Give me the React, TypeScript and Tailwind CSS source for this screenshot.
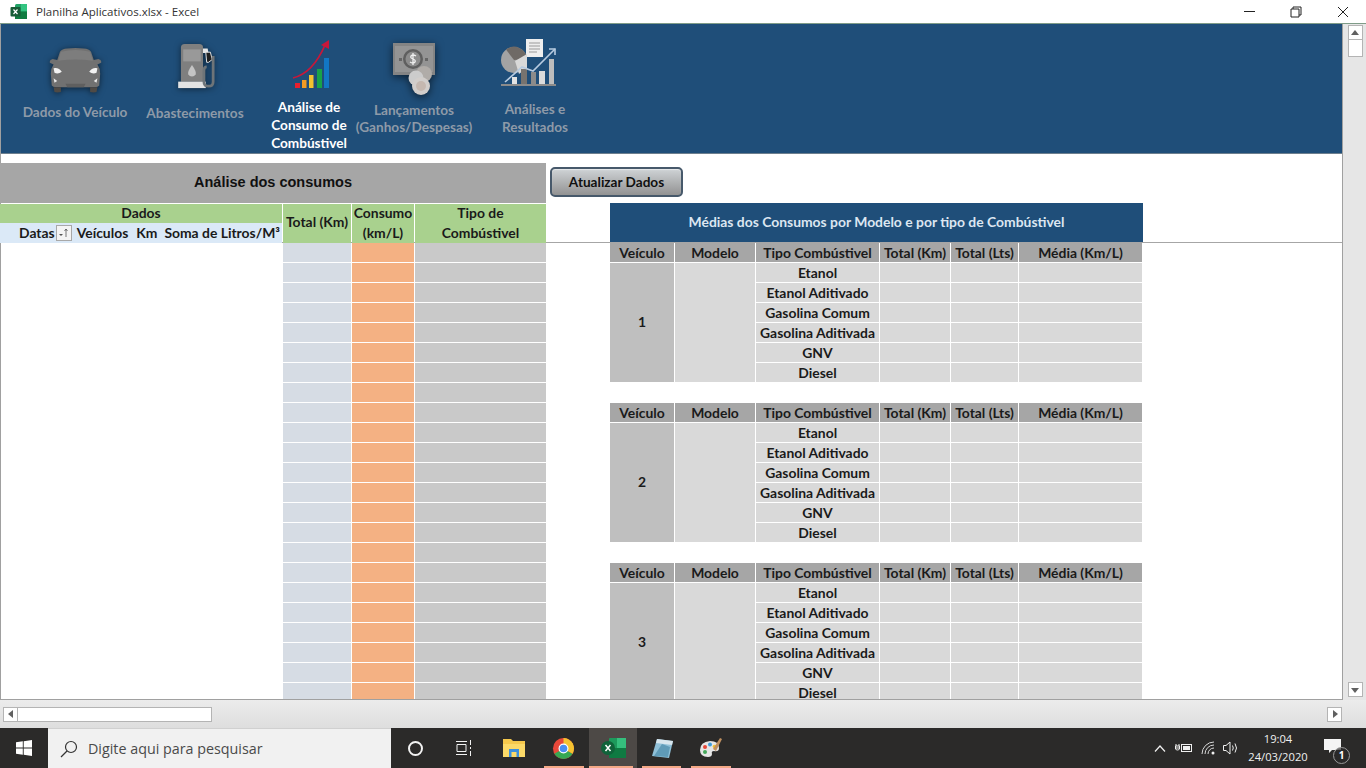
const calibri = { fontFamily: '"Lato", "Liberation Sans", sans-serif' };
const segoe = { fontFamily: '"Open Sans", sans-serif' };

function CarIcon() {
  return (
    <svg width="53" height="46" viewBox="0 0 58 50" className="drop-shadow-[0_1px_3px_rgba(0,0,0,0.55)]">
      <path d="M5 19 L1 17 Q0 14 4 13 L9 14 L12 5 Q14 2 20 1.500 Q29 0.500 38 1.500 Q44 2 46 5 L49 14 L54 13 Q58 14 57 17 L53 19 Q56 23 56 29 L55 42 Q54 44 50 44 L8 44 Q4 44 3 42 L2 29 Q2 23 5 19 Z" fill="#717171" />
      <path d="M13 5 Q29 1 45 5 L48 15 Q29 12 10 15 Z" fill="#7d7d7d" />
      <path d="M5 44 H13 V49 Q9 50 6 49 Z M45 44 H53 L52 49 Q49 50 45 49 Z" fill="#4f4a45" />
      <path d="M5 23 Q11 22 14 27 Q10 30 6 28 Z M53 23 Q47 22 44 27 Q48 30 52 28 Z" fill="#f2f2f2" />
      <path d="M5 34 L9 37 L6 39 Z M53 34 L49 37 L52 39 Z" fill="#e8e8e8" />
      <path d="M18 40 H40 L38 44 H20 Z" fill="#5f5f5f" />
    </svg>
  );
}

function PumpIcon() {
  return (
    <svg width="39" height="46" viewBox="0 0 42 50" className="ml-[5px] drop-shadow-[0_1px_3px_rgba(0,0,0,0.5)]">
      <path d="M3 5 Q3 1 7 1 H23 Q27 1 27 5 V42 H3 Z" fill="#7f7f7f" />
      <rect x="5.500" y="7" width="19" height="13" fill="#999999" />
      <path d="M15 24 Q20 31 19 34 A4.500 4.500 0 0 1 11 34 Q10 31 15 24 Z" fill="#c4c4c4" />
      <rect x="0" y="42" width="30" height="7" fill="#e3e3e3" />
      <path d="M27 6 H32 L33 11 H27 Z" fill="#e6e6e6" />
      <path d="M30 10 H35 L37 18 L33 21 H31 Z" fill="#202020" stroke="#eeeeee" strokeWidth="1" />
      <path d="M38 14 V42 Q38 47 33 47 Q28 47 28 42 V30 Q28 26 31 26" fill="none" stroke="#6e7478" strokeWidth="3" />
    </svg>
  );
}

function ChartIcon() {
  return (
    <svg width="38" height="48" viewBox="0 0 38 48" className="ml-[4px]">
      <rect x="3" y="43" width="5" height="5" fill="#e81f2e" />
      <rect x="10" y="40" width="4.500" height="8" fill="#f39c24" />
      <rect x="17" y="35" width="4.500" height="13" fill="#f2c230" />
      <rect x="25" y="29" width="5" height="19" fill="#17a349" />
      <rect x="32" y="18" width="5" height="30" fill="#1277c4" />
      <path d="M1 38 Q21 33 33 5" fill="none" stroke="#c8173a" strokeWidth="1.800" />
      <path d="M29 5 L37 0 L37 9 Z" fill="#c8173a" />
    </svg>
  );
}

function MoneyIcon() {
  return (
    <svg width="44" height="56" viewBox="0 0 44 56" className="drop-shadow-[0_2px_4px_rgba(0,0,0,0.6)]">
      <rect x="1" y="0" width="42" height="32" fill="#848484" />
      <rect x="3" y="3" width="38" height="26" fill="#949494" />
      <circle cx="21" cy="16" r="10" fill="#5f5f5f" />
      <circle cx="21" cy="16" r="7.500" fill="#8c8c8c" />
      <path d="M24 13 Q21 11 19 13 Q18 15 21 16 Q24 17 23 19 Q21 21 18 19 M21 10 V22" fill="none" stroke="#f0f0f0" strokeWidth="1.300" />
      <rect x="7" y="15" width="3" height="3" fill="#666666" />
      <rect x="33" y="15" width="3" height="3" fill="#666666" />
      <circle cx="32" cy="31" r="8" fill="#b0aca8" />
      <circle cx="24" cy="35" r="7.500" fill="#cccccc" />
      <circle cx="29" cy="43" r="9" fill="#d2cecb" />
      <circle cx="29" cy="43" r="5" fill="#c5b8b0" />
    </svg>
  );
}

function AnalysisIcon() {
  return (
    <svg width="58" height="50" viewBox="0 0 58 50" className="mr-[13px]">
      <rect x="26" y="1" width="17" height="18" fill="#eeeeee" />
      <path d="M29 5 H40 M29 8 H40 M29 11 H40 M29 14 H37" stroke="#9a9a9a" strokeWidth="1" />
      <circle cx="14" cy="22" r="13" fill="#a3a3a3" />
      <path d="M14 22 L6 11.500 A13 13 0 0 1 27 21 Z" fill="#6f6a66" />
      <path d="M15 23 L27 16 L27 30 L19 36 Z" fill="#d9d9d9" />
      <rect x="12" y="39" width="5" height="7" fill="#e3e3e3" />
      <rect x="21" y="31" width="6" height="15" fill="#77736f" />
      <rect x="31" y="34" width="5" height="12" fill="#8b8b8b" />
      <rect x="39" y="33" width="6" height="13" fill="#dbdbdb" />
      <rect x="49" y="21" width="5" height="25" fill="#bdbdbd" />
      <path d="M5 44 L22 29 L33 33 L55 11" fill="none" stroke="#b8cbe0" strokeWidth="1.600" />
      <path d="M49 11 H55 V17" fill="none" stroke="#b8cbe0" strokeWidth="1.600" />
      <rect x="1" y="46" width="55" height="2" fill="#8b8b8b" />
    </svg>
  );
}

function RibbonItem({ w, pt, gap, lead, active, icon, lines }: { w: string; pt: string; gap: string; lead: string; active?: boolean; icon: React.ReactNode; lines: string[] }) {
  return (
    <div className={`flex flex-col items-center ${w} ${pt}`}>
      {icon}
      <div className={`${gap} ${lead} text-center text-[13.6px] font-bold whitespace-nowrap ${active ? "text-white" : "text-[#8e9aa8]"}`} style={calibri}>
        {lines.map((l) => (
          <div key={l}>{l}</div>
        ))}
      </div>
    </div>
  );
}

const fuels = ["Etanol", "Etanol Aditivado", "Gasolina Comum", "Gasolina Aditivada", "GNV", "Diesel"];
const headers = ["Veículo", "Modelo", "Tipo Combústivel", "Total (Km)", "Total (Lts)", "Média (Km/L)"];

function VehicleTable({ n }: { n: number }) {
  return (
    <div className="grid grid-cols-[64px_80px_123px_70px_67px_123px] gap-x-px mb-[20px] text-[13.9px] font-bold text-[#1a1a1a] w-[532px] shrink-0" style={calibri}>
      {headers.map((h) => (
        <div key={h} className="h-[19px] mb-px pt-px bg-[#a6a6a6] flex items-center justify-center whitespace-nowrap">{h}</div>
      ))}
      <div className="row-span-6 bg-[#bfbfbf] mb-px flex items-center justify-center">{n}</div>
      <div className="row-span-6 bg-[#d9d9d9] mb-px" />
      {fuels.map((f) => (
        <div key={f} className="contents">
          <div className="h-[19px] mb-px pt-px bg-[#d9d9d9] flex items-center justify-center whitespace-nowrap">{f}</div>
          <div className="h-[19px] mb-px bg-[#d9d9d9]" />
          <div className="h-[19px] mb-px bg-[#d9d9d9]" />
          <div className="h-[19px] mb-px bg-[#d9d9d9]" />
        </div>
      ))}
    </div>
  );
}

function ScrollArrow({ dir }: { dir: "up" | "down" | "left" | "right" }) {
  const pts = { up: "1,7 5,2 9,7", down: "1,3 9,3 5,8", left: "7,1 7,9 2,5", right: "3,1 3,9 8,5" }[dir];
  return (
    <div className="w-[15px] h-[15px] bg-white border border-[#b4b4b4] flex items-center justify-center shrink-0">
      <svg width="10" height="10" viewBox="0 0 10 10">
        <polygon points={pts} fill="#606060" />
      </svg>
    </div>
  );
}

function TitleBar() {
  return (
    <div className="h-[23px] bg-white flex items-center shrink-0">
      <svg width="17" height="17" viewBox="0 0 17 17" className="ml-[10px]">
        <rect x="5" y="1" width="12" height="15" rx="1.500" fill="#21a366" />
        <rect x="11" y="1" width="6" height="7.500" fill="#33c481" />
        <rect x="5" y="8.500" width="12" height="7.500" fill="#107c41" />
        <rect x="0.500" y="4" width="10" height="9.500" rx="1" fill="#185c37" />
        <path d="M3.500 6.500 L7.500 11 M7.500 6.500 L3.500 11" stroke="#ffffff" strokeWidth="1.200" />
      </svg>
      <span className="ml-[9px] text-[11.500px] text-[#333333]" style={segoe}>Planilha Aplicativos.xlsx - Excel</span>
      <div className="ml-auto flex items-center pr-[17px] gap-[35px]">
        <svg width="11" height="11" viewBox="0 0 11 11"><path d="M0 5.500 H11" stroke="#222222" strokeWidth="1" /></svg>
        <svg width="12" height="12" viewBox="0 0 12 12"><path d="M3 3 V1 H11 V9 H9 M1 3 H9 V11 H1 Z" fill="none" stroke="#222222" strokeWidth="1" /></svg>
        <svg width="12" height="12" viewBox="0 0 12 12"><path d="M1 1 L11 11 M11 1 L1 11" stroke="#222222" strokeWidth="1" /></svg>
      </div>
    </div>
  );
}

function Taskbar() {
  return (
    <div className="h-[40px] bg-[#2b2a29] flex items-stretch shrink-0 text-white">
      <div className="w-[48px] flex items-center justify-center">
        <svg width="16" height="16" viewBox="0 0 16 16" fill="#ffffff">
          <path d="M0 2.300 L6.800 1.300 V7.500 H0 Z M7.700 1.200 L16 0 V7.500 H7.700 Z M0 8.500 H6.800 V14.700 L0 13.700 Z M7.700 8.500 H16 V16 L7.700 14.800 Z" />
        </svg>
      </div>
      <div className="w-[343px] bg-[#f1f1f1] border-t border-[#d0d0d0] flex items-center pl-[12px]">
        <svg width="18" height="18" viewBox="0 0 18 18" fill="none" stroke="#333333" strokeWidth="1.200">
          <circle cx="11" cy="7" r="5.500" />
          <path d="M7 11 L1 17" />
        </svg>
        <span className="ml-[10px] text-[14.300px] text-[#4a4a4a]" style={segoe}>Digite aqui para pesquisar</span>
      </div>
      <div className="w-[49px] flex items-center justify-center">
        <div className="w-[15px] h-[15px] rounded-full border-2 border-[#f2f2f2]" />
      </div>
      <div className="w-[48px] flex items-center justify-center">
        <svg width="17" height="16" viewBox="0 0 17 16" fill="none" stroke="#f2f2f2" strokeWidth="1">
          <path d="M0 1.500 H11 M0 14.500 H11 M1 4.500 H10 V11.500 H1 Z M14.500 0 V5 M14.500 7 V9 M14.500 11 V16" />
        </svg>
      </div>
      <div className="w-[50px] flex items-center justify-center pl-[2px]">
        <svg width="22" height="18" viewBox="0 0 22 18">
          <path d="M0 0 H8 L10 2 H22 V18 H0 Z" fill="#f5c84c" />
          <rect x="0" y="5" width="22" height="13" fill="#fbd968" />
          <path d="M6 18 V10 H16 V18 H13.500 V13 H8.500 V18 Z" fill="#3c8fdc" />
        </svg>
      </div>
      <div className="relative w-[51px] flex items-center justify-center">
        <svg width="23" height="23" viewBox="0 0 24 24">
          <circle cx="12" cy="12" r="11" fill="#e8483a" />
          <path d="M12 12 L2.500 17.500 A11 11 0 0 0 21.500 17.500 Z" fill="#35a853" />
          <path d="M12 12 L21.500 17.500 A11 11 0 0 0 12 1 Z" fill="#f5c230" />
          <circle cx="12" cy="12" r="5.200" fill="#ffffff" />
          <circle cx="12" cy="12" r="4" fill="#4a8ef0" />
        </svg>
        <div className="absolute bottom-0 left-[6px] right-[5px] h-[2px] bg-[#f4a886]" />
      </div>
      <div className="relative w-[48px] bg-[#4d4946] flex items-center justify-center">
        <svg width="25" height="20" viewBox="0 0 25 20">
          <rect x="8" y="0" width="17" height="20" rx="1" fill="#1d9a5c" />
          <rect x="16" y="0" width="9" height="10" fill="#35bf7d" />
          <rect x="8" y="10" width="17" height="10" fill="#0f7a42" />
          <circle cx="7" cy="10" r="7" fill="#10633a" />
          <path d="M4.500 7 L9.500 13 M9.500 7 L4.500 13" stroke="#ffffff" strokeWidth="1.500" />
        </svg>
        <div className="absolute bottom-0 left-0 right-[4px] h-[2px] bg-[#f4a886]" />
      </div>
      <div className="relative w-[49px] flex items-center justify-center">
        <svg width="24" height="24" viewBox="0 0 24 24">
          <path d="M7 3 L23 5 L19 22 L2 20 Z" fill="#8fc0d8" />
          <path d="M7 3 L23 5 L22 9 L6 7 Z" fill="#d8e6ee" />
          <path d="M4 20 L12 8 L20 11 L18 21 Z" fill="#5f9bb8" />
        </svg>
        <div className="absolute bottom-0 left-[5px] right-[5px] h-[2px] bg-[#f4a886]" />
      </div>
      <div className="relative w-[49px] flex items-center justify-center">
        <svg width="24" height="24" viewBox="0 0 24 24">
          <path d="M1 14 Q1 6 11 5 Q20 5 20 12 Q20 16 15 15 Q12 15 13 18 Q13 21 9 21 Q1 21 1 14 Z" fill="#e6e6e6" />
          <circle cx="6" cy="11" r="2" fill="#e5483a" />
          <circle cx="11" cy="8.500" r="2" fill="#3f9cd8" />
          <circle cx="15.500" cy="10.500" r="1.800" fill="#f0c030" />
          <circle cx="6" cy="16" r="2" fill="#45a85a" />
          <path d="M14 13 L21 2 L23 3 L17 15 Z" fill="#c09060" />
        </svg>
        <div className="absolute bottom-0 left-[5px] right-[4px] h-[2px] bg-[#f4a886]" />
      </div>
      <div className="ml-auto flex items-center pr-[10px]">
        <svg width="12" height="7" viewBox="0 0 12 7" fill="none" stroke="#f0f0f0" strokeWidth="1.200" className="mr-[9px]"><path d="M1 6.500 L6 1 L11 6.500" /></svg>
        <svg width="18" height="12" viewBox="0 0 18 12" fill="none" stroke="#f0f0f0" strokeWidth="1" className="mr-[8px]">
          <rect x="6.500" y="2.500" width="10" height="7" />
          <rect x="8" y="4" width="7" height="4" fill="#f0f0f0" stroke="none" />
          <path d="M0 6 H5 M1 2 V4 M4 2 V4 M0.500 4 H4.500 V7 Q4 8 2.500 8 Q1 8 0.500 7 Z" />
        </svg>
        <svg width="15" height="14" viewBox="0 0 15 14" fill="none" stroke="#d8d8d8" strokeWidth="1" className="mr-[7px]">
          <path d="M1 13 A12 12 0 0 1 13 1 M4 13 A9 9 0 0 1 13 4 M7 13 A6 6 0 0 1 13 7" />
          <circle cx="12" cy="12" r="1.500" fill="#f0f0f0" stroke="none" />
        </svg>
        <svg width="17" height="14" viewBox="0 0 17 14" fill="none" stroke="#f0f0f0" strokeWidth="1" className="mr-[8px]">
          <path d="M0.500 4.500 H3 L7 1 V13 L3 9.500 H0.500 Z M9.500 4.500 Q11 7 9.500 9.500 M12 2.500 Q15 7 12 11.500" />
        </svg>
        <div className="w-[60px] text-center text-[11.200px] leading-[18px] text-[#f0f0f0] whitespace-nowrap" style={segoe}>
          <div>19:04</div>
          <div>24/03/2020</div>
        </div>
        <div className="relative w-[48px] h-full flex items-center justify-center">
          <svg width="17" height="15" viewBox="0 0 17 15" className="-mt-[4px]"><path d="M0 0 H17 V11 H8 L5 14 V11 H0 Z" fill="#f5f5f5" /></svg>
          <div className="absolute left-[25px] top-[19px] w-[17px] h-[17px] rounded-full bg-[#2b2a29]/70 border border-[#9a9a9a] flex items-center justify-center text-[10px] text-white font-bold" style={segoe}>1</div>
        </div>
      </div>
    </div>
  );
}

export default function App() {
  const rows = Array.from({ length: 23 }, (_, i) => i);
  return (
    <div className="w-[1366px] h-[768px] overflow-hidden flex flex-col bg-white">
      <TitleBar />

      <div className="h-[677px] flex shrink-0 bg-[#e6e6e6] border-t border-[#7f9c88]">
        <div className="w-[1343px] flex flex-col bg-white border-r border-b border-[#a0a0a0] border-l border-l-[#a0a0a0]">
          {/* ribbon */}
          <div className="h-[130px] bg-[#1f4e79] flex pl-[14px] shrink-0 border-b border-[#6d7f8e]">
            <RibbonItem w="w-[120px]" pt="pt-[23px]" gap="mt-[10px]" lead="leading-[18px]" icon={<CarIcon />} lines={["Dados do Veículo"]} />
            <RibbonItem w="w-[120px]" pt="pt-[19px]" gap="mt-[15px]" lead="leading-[18px]" icon={<PumpIcon />} lines={["Abastecimentos"]} />
            <RibbonItem w="w-[108px]" pt="pt-[16px]" gap="mt-[10px]" lead="leading-[18px]" active icon={<ChartIcon />} lines={["Análise de", "Consumo de", "Combústivel"]} />
            <RibbonItem w="w-[102px]" pt="pt-[19px]" gap="mt-[3px]" lead="leading-[17px]" icon={<MoneyIcon />} lines={["Lançamentos", "(Ganhos/Despesas)"]} />
            <RibbonItem w="w-[140px]" pt="pt-[14px]" gap="mt-[12px]" lead="leading-[18px]" icon={<AnalysisIcon />} lines={["Análises e", "Resultados"]} />
          </div>

          {/* frozen panes */}
          <div className="h-[89px] flex pt-[9px] border-b border-[#a6a6a6] shrink-0">
            <div className="w-[546px] shrink-0 -ml-px">
              <div className="h-[40px] bg-[#a6a6a6] flex items-center justify-center text-[14.5px] font-bold text-[#111111]" style={{ fontFamily: '"Liberation Sans", sans-serif' }}>
                Análise dos consumos
              </div>
              <div className="mt-px h-[39px] flex gap-px text-[13.9px] font-bold text-[#1a1a1a]" style={calibri}>
                <div className="w-[282px] flex flex-col">
                  <div className="h-[19px] bg-[#a9d18e] flex items-center justify-center">Dados</div>
                  <div className="h-[20px] bg-[#dbe9f7] flex items-center pl-[19px] whitespace-nowrap">
                    <span>Datas</span>
                    <span className="ml-[1px] w-[16px] h-[16px] bg-[#f4f4f4] border border-[#a8a8a8] flex items-center justify-center">
                      <svg width="11" height="10" viewBox="0 0 11 10"><path d="M1 6 H5 L3 8 Z" fill="#555555" /><path d="M8 9 V1 M6.500 3 L8 1 L9.500 3" stroke="#555555" fill="none" strokeWidth="0.800" /></svg>
                    </span>
                    <span className="ml-[5px]">Veículos</span>
                    <span className="ml-[8px]">Km</span>
                    <span className="ml-[7px]">Soma de Litros/M³</span>
                  </div>
                </div>
                <div className="w-[68px] pb-[2px] bg-[#a9d18e] flex items-center justify-center whitespace-nowrap">Total (Km)</div>
                <div className="w-[62px] bg-[#a9d18e] text-center leading-[20px]"><div className="-mt-px">Consumo</div><div>(km/L)</div></div>
                <div className="w-[131px] bg-[#a9d18e] text-center leading-[20px]"><div className="-mt-px">Tipo de</div><div>Combústivel</div></div>
              </div>
            </div>
            <div className="flex flex-col pl-[4px]">
              <div className="mt-[4px] w-[133px] h-[30px] rounded-[5px] border-2 border-[#47596b] bg-gradient-to-b from-[#cfd3d6] to-[#939393] shadow-[inset_0_1px_1px_rgba(255,255,255,0.5)] flex items-center justify-center text-[13.6px] font-bold text-[#111111]" style={calibri}>
                Atualizar Dados
              </div>
              <div className="mt-[6px] ml-[60px] w-[533px] h-[39px] bg-[#1f4e79] text-[#dce6f1] flex items-center justify-center text-[13.9px] font-bold whitespace-nowrap" style={calibri}>
                Médias dos Consumos por Modelo e por tipo de Combústivel
              </div>
            </div>
          </div>

          <div className="flex-1 min-h-0 overflow-hidden flex">
            <div className="w-[282px] shrink-0 -ml-px" />
            <div className="flex flex-col shrink-0 ml-px">
              {rows.map((i) => (
                <div key={i} className="flex gap-px h-[20px] shrink-0 pb-px">
                  <div className="w-[68px] bg-[#d6dce4]" />
                  <div className="w-[62px] bg-[#f4b183]" />
                  <div className="w-[131px] bg-[#c9c9c9]" />
                </div>
              ))}
            </div>
            <div className="flex flex-col shrink-0 ml-[64px]">
              <VehicleTable n={1} />
              <VehicleTable n={2} />
              <VehicleTable n={3} />
            </div>
          </div>
        </div>

        {/* vertical scrollbar */}
        <div className="flex-1 flex flex-col items-center pt-[1px] pl-[1px]">
          <ScrollArrow dir="up" />
          <div className="w-[15px] h-[17px] bg-white border border-[#b4b4b4] border-t-0" />
          <div className="mt-auto mb-[3px]"><ScrollArrow dir="down" /></div>
        </div>
      </div>

      {/* horizontal scrollbar */}
      <div className="h-[28px] bg-gradient-to-b from-[#ececec] to-[#dedede] flex items-center pl-[3px] shrink-0 pr-[24px]">
        <ScrollArrow dir="left" />
        <div className="w-[194px] h-[15px] bg-white border border-[#b4b4b4] border-l-0" />
        <div className="ml-auto"><ScrollArrow dir="right" /></div>
      </div>

      <Taskbar />
    </div>
  );
}
